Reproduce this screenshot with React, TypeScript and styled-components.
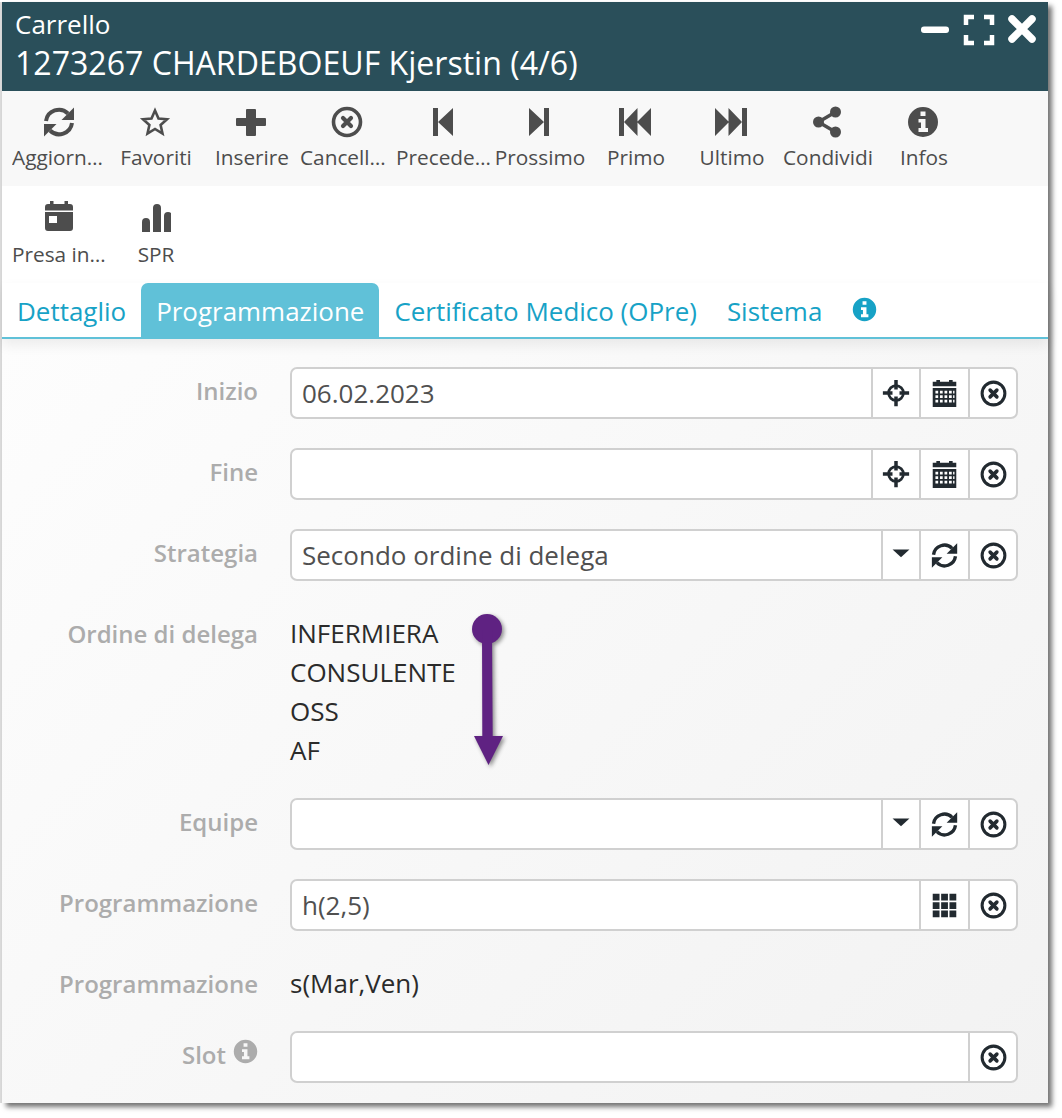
import React from 'react';
import styled, { createGlobalStyle } from 'styled-components';

const GlobalStyle = createGlobalStyle`
  html, body {
    margin: 0;
    background: #fff;
    font-family: 'Open Sans', sans-serif;
  }
`;

const Page = styled.div`
  width: 1062px;
  height: 1118px;
  padding: 2px 0 0 2px;
  box-sizing: border-box;
  overflow: hidden;
`;

const Window = styled.div`
  position: relative;
  width: 1046px;
  height: 1101px;
  display: flex;
  flex-direction: column;
  background: #fff;
  box-shadow: 4px 4px 5px rgba(0, 0, 0, 0.55), -2px 0 0 #dcdcdc;
`;

const Header = styled.header`
  height: 89px;
  flex: none;
  box-sizing: border-box;
  padding: 4px 11px 0 13px;
  display: flex;
  justify-content: space-between;
  background: #2a4f5a;
  color: #fff;
`;

const HeaderText = styled.div`
  display: flex;
  flex-direction: column;
`;

const Subtitle = styled.div`
  font-size: 26px;
  line-height: 36px;
`;

const Title = styled.div`
  font-size: 32.1px;
  line-height: 42px;
`;

const WindowControls = styled.div`
  display: flex;
  gap: 12px;
  padding: 8px 0 0;
  height: 32px;
  svg { display: block; }
`;

const ToolRow = styled.div<{ $shade?: boolean }>`
  display: flex;
  flex: none;
  height: ${p => (p.$shade ? 95 : 97)}px;
  padding-left: 10px;
  background: ${p => (p.$shade ? '#f8f8f8' : '#fff')};
`;

const ToolButton = styled.div<{ $tall?: boolean }>`
  width: 96px;
  box-sizing: border-box;
  padding-top: ${p => (p.$tall ? 14 : 15)}px;
  display: flex;
  flex-direction: column;
  align-items: center;
  gap: ${p => (p.$tall ? 8 : 5)}px;
  color: #4d4d4d;
  svg { display: block; flex: none; margin-left: -2px; }
`;

const ToolLabel = styled.span`
  width: 100%;
  font-size: 20.8px;
  line-height: 28px;
  text-align: center;
  white-space: nowrap;
  overflow: hidden;
  text-overflow: ellipsis;
`;

const Tabs = styled.nav`
  flex: none;
  height: 56px;
  box-sizing: border-box;
  display: flex;
  align-items: stretch;
  border-bottom: 2px solid #60c1d8;
  position: relative;
  z-index: 1;
  box-shadow: 0 6px 12px rgba(0, 0, 0, 0.07);
  background: #fff;
`;

const Tab = styled.div<{ $active?: boolean }>`
  padding: 0 15px;
  font-size: 25.96px;
  line-height: 56px;
  height: 56px;
  box-sizing: border-box;
  border-radius: 7px 7px 0 0;
  color: ${p => (p.$active ? '#fff' : '#17a2c6')};
  background: ${p => (p.$active ? '#60c1d8' : 'transparent')};
`;

const TabIcon = styled.div`
  margin-left: 15px;
  padding-top: 14px;
  color: #17a2c6;
`;

const Form = styled.div`
  flex: 1;
  padding: 28px 30px 0 0;
  display: flex;
  flex-direction: column;
  gap: 29px;
  background: linear-gradient(135deg, #fdfdfd 0%, #f2f2f2 100%);
`;

const Row = styled.div`
  display: grid;
  grid-template-columns: 256px 1fr;
  column-gap: 32px;
  align-items: start;
`;

const Label = styled.div<{ $static?: boolean }>`
  display: flex;
  justify-content: flex-end;
  align-items: center;
  gap: 7px;
  padding-top: ${p => (p.$static ? 4 : 7)}px;
  margin-bottom: ${p => (p.$static ? -2 : 0)}px;
  font-size: 24px;
  line-height: ${p => (p.$static ? 39 : 33)}px;
  font-weight: 600;
  color: #acacac;
  svg { margin-top: -6px; }
`;

const StaticValue = styled.div`
  padding-top: 4px;
  margin-bottom: -1px;
  font-size: 26px;
  line-height: 39px;
  color: #2b2b2b;
`;

const Field = styled.div`
  display: flex;
  height: 52px;
  box-sizing: border-box;
  border: 2px solid #d0d0d0;
  border-radius: 7px;
  background: #fff;
  overflow: hidden;
`;

const FieldValue = styled.div`
  flex: 1;
  padding-left: 10px;
  font-size: 26px;
  line-height: 49px;
  color: #505050;
`;

const FieldButton = styled.div<{ $width?: number }>`
  width: ${p => p.$width ?? 47}px;
  flex: none;
  display: flex;
  align-items: center;
  justify-content: center;
  border-left: 2px solid #d0d0d0;
  color: #222a30;
  &:last-child { width: 46px; }
`;

const Arrow = styled.svg`
  position: absolute;
  left: 464px;
  top: 607px;
  filter: drop-shadow(2px 2px 2px rgba(0, 0, 0, 0.45));
`;

type IconProps = { size?: number };

const Glyph = ({ size = 32, children }: IconProps & { children: React.ReactNode }) => (
  <svg width={size} height={size} viewBox="0 0 32 32" fill="currentColor">
    {children}
  </svg>
);

const SyncIcon = ({ size }: IconProps) => (
  <Glyph size={size}>
    <path d="M3 15A13 13 0 0 1 25 7.500" fill="none" stroke="currentColor" strokeWidth="4" />
    <path d="M31 1.500v12.500H18.500z" />
    <path d="M29 17A13 13 0 0 1 7 24.500" fill="none" stroke="currentColor" strokeWidth="4" />
    <path d="M1 30.500V18h12.500z" />
  </Glyph>
);

const StarIcon = ({ size }: IconProps) => (
  <Glyph size={size}>
    <path
      d="M16 4.500l3.500 8 8.500.8-6.400 5.700 1.900 8.500-7.500-4.500-7.500 4.500 1.900-8.500L4 13.300l8.500-.8z"
      fill="none"
      stroke="currentColor"
      strokeWidth="2.600"
      strokeLinejoin="miter"
    />
  </Glyph>
);

const PlusIcon = ({ size }: IconProps) => (
  <Glyph size={size}>
    <path d="M12 3h8a1 1 0 0 1 1 1v8h9a1 1 0 0 1 1 1v6a1 1 0 0 1-1 1h-9v9a1 1 0 0 1-1 1h-8a1 1 0 0 1-1-1v-9H2a1 1 0 0 1-1-1v-6a1 1 0 0 1 1-1h9V4a1 1 0 0 1 1-1z" />
  </Glyph>
);

const CancelIcon = ({ size }: IconProps) => (
  <Glyph size={size}>
    <circle cx="16" cy="16" r="13.500" fill="none" stroke="currentColor" strokeWidth="3.600" />
    <path d="M12 12l8 8M20 12l-8 8" stroke="currentColor" strokeWidth="4.200" strokeLinecap="round" />
  </Glyph>
);

const StepBackIcon = ({ size }: IconProps) => (
  <Glyph size={size}>
    <path d="M6 2h5v28H6zM11 16L26 2v28z" />
  </Glyph>
);

const StepForwardIcon = ({ size }: IconProps) => (
  <Glyph size={size}>
    <path d="M26 2h-5v28h5zM21 16L6 2v28z" />
  </Glyph>
);

const FastBackIcon = ({ size }: IconProps) => (
  <Glyph size={size}>
    <path d="M0 2h5v28H0zM5 16L18.500 2v28zM18 16L32 2v28z" />
  </Glyph>
);

const FastForwardIcon = ({ size }: IconProps) => (
  <Glyph size={size}>
    <path d="M32 2h-5v28h5zM27 16L13.500 2v28zM14 16L0 2v28z" />
  </Glyph>
);

const ShareIcon = ({ size }: IconProps) => (
  <Glyph size={size}>
    <circle cx="7.500" cy="16" r="5.500" />
    <circle cx="24.500" cy="6" r="5.500" />
    <circle cx="24.500" cy="26" r="5.500" />
    <path d="M7.500 16L24.500 6M7.500 16l17 10" stroke="currentColor" strokeWidth="3.500" />
  </Glyph>
);

const InfoIcon = ({ size }: IconProps) => (
  <Glyph size={size}>
    <path
      fillRule="evenodd"
      d="M16 1a15 15 0 1 1 0 30 15 15 0 0 1 0-30zM13.500 5.500v4.500h5V5.500zM11.500 13v3.500h2.500V22h-2.500v4h9.500v-4h-2.500v-9z"
    />
  </Glyph>
);

const CalendarCheckIcon = ({ size }: IconProps) => (
  <Glyph size={size}>
    <path
      fillRule="evenodd"
      d="M7 1h3.500v3h11V1H25v3h2a3 3 0 0 1 3 3v3.500H2V7a3 3 0 0 1 3-3h2zM2 12h28v16a3 3 0 0 1-3 3H5a3 3 0 0 1-3-3zM6 16v7h8v-7z"
    />
  </Glyph>
);

const BarsIcon = ({ size = 32 }: IconProps) => (
  <svg width={size} height={size} viewBox="-2 -3 32 32" fill="currentColor">
    <path d="M1 19a4 4 0 0 1 8 0v12H1zM12 5a4 4 0 0 1 8 0v26h-8zM23 13a4 4 0 0 1 8 0v18h-8z" />
  </svg>
);

const TargetIcon = ({ size }: IconProps) => (
  <Glyph size={size}>
    <circle cx="16" cy="16" r="8.500" fill="none" stroke="currentColor" strokeWidth="3" />
    <path d="M14 1h4v11h-4zM14 20h4v11h-4zM1 14h11v4H1zM20 14h11v4H20z" />
  </Glyph>
);

const CalendarIcon = ({ size }: IconProps) => (
  <Glyph size={size}>
    <path d="M7 1h4v2h10V1h4v2h4v5H3V3h4z" />
    <path
      fillRule="evenodd"
      d="M3 10h26v21H3zM6 13v3h3v-3zM11 13v3h3v-3zM16 13v3h3v-3zM21 13v3h3v-3zM25.500 13v3H27v-3zM6 18v3h3v-3zM11 18v3h3v-3zM16 18v3h3v-3zM21 18v3h3v-3zM25.500 18v3H27v-3zM6 23v3h3v-3zM11 23v3h3v-3zM16 23v3h3v-3zM21 23v3h3v-3zM25.500 23v3H27v-3z"
    />
  </Glyph>
);

const CaretIcon = ({ size }: IconProps) => (
  <Glyph size={size}>
    <path d="M1 6h30L16 20z" />
  </Glyph>
);

const GridIcon = ({ size }: IconProps) => (
  <Glyph size={size}>
    <path d="M3 3h7.500v7.500H3zM12.300 3h7.500v7.500h-7.500zM21.500 3H29v7.500h-7.500zM3 12.300h7.500v7.500H3zM12.300 12.300h7.500v7.500h-7.500zM21.500 12.300H29v7.500h-7.500zM3 21.500h7.500V29H3zM12.300 21.500h7.500V29h-7.500zM21.500 21.500H29V29h-7.500z" />
  </Glyph>
);

const MinimizeIcon = () => (
  <svg width="30" height="32" viewBox="0 0 30 32" fill="#fff">
    <rect x="0" y="12.500" width="28" height="6.500" rx="3" />
  </svg>
);

const MaximizeIcon = () => (
  <svg width="32" height="32" viewBox="0 0 32 32" fill="none" stroke="#fff" strokeWidth="4.500">
    <path d="M3 11V3h8M21 3h8v8M29 21v8h-8M11 29H3v-8" />
  </svg>
);

const CloseIcon = () => (
  <svg width="30" height="32" viewBox="0 0 30 32" fill="none" stroke="#fff" strokeWidth="7.500" strokeLinecap="round">
    <path d="M5 5l20 20M25 5L5 25" />
  </svg>
);

const tools = [
  { label: 'Aggiornare', icon: <SyncIcon /> },
  { label: 'Favoriti', icon: <StarIcon /> },
  { label: 'Inserire', icon: <PlusIcon /> },
  { label: 'Cancellare', icon: <CancelIcon /> },
  { label: 'Precedente', icon: <StepBackIcon /> },
  { label: 'Prossimo', icon: <StepForwardIcon /> },
  { label: 'Primo', icon: <FastBackIcon /> },
  { label: 'Ultimo', icon: <FastForwardIcon /> },
  { label: 'Condividi', icon: <ShareIcon /> },
  { label: 'Infos', icon: <InfoIcon /> },
];

const App = () => (
  <Page>
    <GlobalStyle />
    <Window>
      <Header>
        <HeaderText>
          <Subtitle>Carrello</Subtitle>
          <Title>1273267 CHARDEBOEUF Kjerstin (4/6)</Title>
        </HeaderText>
        <WindowControls>
          <MinimizeIcon />
          <MaximizeIcon />
          <CloseIcon />
        </WindowControls>
      </Header>
      <ToolRow $shade>
        {tools.map(t => (
          <ToolButton key={t.label}>
            {t.icon}
            <ToolLabel>{t.label}</ToolLabel>
          </ToolButton>
        ))}
      </ToolRow>
      <ToolRow>
        <ToolButton $tall>
          <CalendarCheckIcon />
          <ToolLabel>Presa in carico</ToolLabel>
        </ToolButton>
        <ToolButton $tall>
          <BarsIcon />
          <ToolLabel>SPR</ToolLabel>
        </ToolButton>
      </ToolRow>
      <Tabs>
        <Tab>Dettaglio</Tab>
        <Tab $active>Programmazione</Tab>
        <Tab>Certificato Medico (OPre)</Tab>
        <Tab>Sistema</Tab>
        <TabIcon>
          <InfoIcon size={25} />
        </TabIcon>
      </Tabs>
      <Form>
        <Row>
          <Label>Inizio</Label>
          <Field>
            <FieldValue>06.02.2023</FieldValue>
            <FieldButton $width={46}><TargetIcon size={28} /></FieldButton>
            <FieldButton><CalendarIcon size={29} /></FieldButton>
            <FieldButton><CancelIcon size={27} /></FieldButton>
          </Field>
        </Row>
        <Row>
          <Label>Fine</Label>
          <Field>
            <FieldValue />
            <FieldButton $width={46}><TargetIcon size={28} /></FieldButton>
            <FieldButton><CalendarIcon size={29} /></FieldButton>
            <FieldButton><CancelIcon size={27} /></FieldButton>
          </Field>
        </Row>
        <Row>
          <Label>Strategia</Label>
          <Field>
            <FieldValue>Secondo ordine di delega</FieldValue>
            <FieldButton $width={36}><CaretIcon size={18} /></FieldButton>
            <FieldButton><SyncIcon size={27} /></FieldButton>
            <FieldButton><CancelIcon size={27} /></FieldButton>
          </Field>
        </Row>
        <Row>
          <Label $static>Ordine di delega</Label>
          <StaticValue>
            INFERMIERA<br />CONSULENTE<br />OSS<br />AF
          </StaticValue>
        </Row>
        <Row>
          <Label>Equipe</Label>
          <Field>
            <FieldValue />
            <FieldButton $width={36}><CaretIcon size={18} /></FieldButton>
            <FieldButton><SyncIcon size={27} /></FieldButton>
            <FieldButton><CancelIcon size={27} /></FieldButton>
          </Field>
        </Row>
        <Row>
          <Label>Programmazione</Label>
          <Field>
            <FieldValue>h(2,5)</FieldValue>
            <FieldButton><GridIcon size={29} /></FieldButton>
            <FieldButton><CancelIcon size={27} /></FieldButton>
          </Field>
        </Row>
        <Row>
          <Label $static>Programmazione</Label>
          <StaticValue>s(Mar,Ven)</StaticValue>
        </Row>
        <Row>
          <Label>Slot <InfoIcon size={25} /></Label>
          <Field>
            <FieldValue />
            <FieldButton><CancelIcon size={27} /></FieldButton>
          </Field>
        </Row>
      </Form>
      <Arrow width="44" height="170" viewBox="0 0 44 170">
        <circle cx="21" cy="20" r="15" fill="#5f2282" />
        <path d="M16 20h10l.7 107H37l-14.500 29L8 127h8.300z" fill="#5f2282" />
      </Arrow>
    </Window>
  </Page>
);

export default App;
